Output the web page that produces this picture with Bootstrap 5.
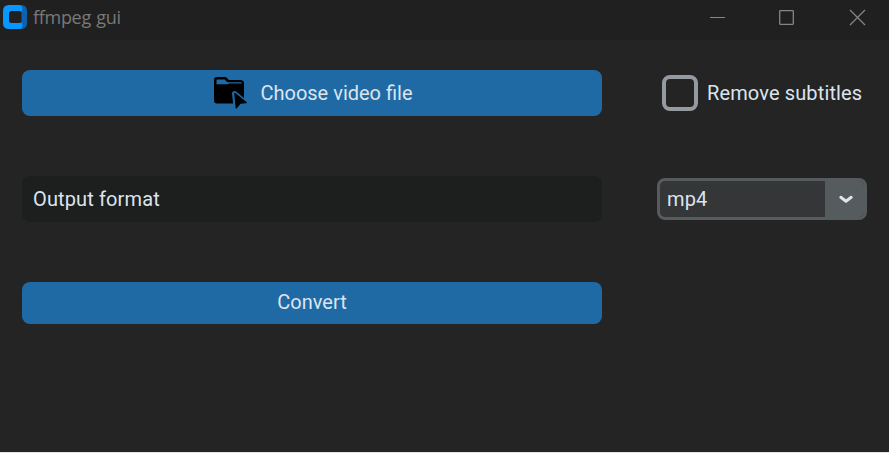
<!DOCTYPE html>
<html lang="en" data-bs-theme="dark">
<head>
<meta charset="utf-8">
<meta name="viewport" content="width=device-width, initial-scale=1">
<title>ffmpeg gui</title>
<link href="https://cdn.jsdelivr.net/npm/bootstrap@5.3.0/dist/css/bootstrap.min.css" rel="stylesheet">
<style>
  body { background: #e4e4e4; font-family: Roboto, "Liberation Sans", sans-serif; font-size: 20px; letter-spacing: .13px; color: #dce4ee; overflow: hidden; }
  .app-window { height: 452px; background: #242424; }
  .title-bar { height: 40px; background: #202020; color: #797979; padding-left: 3px; }
  .title-text { font-family: "Open Sans", "Noto Sans", sans-serif; font-size: 18px; line-height: 24px; margin-left: 6px; letter-spacing: -.3px; word-spacing: 1px; }
  .title-brand { padding-bottom: 6px; }
  .window-controls { width: 212px; padding-bottom: 6px; }
  .app-body { padding: 30px 22px 0; }
  .form-grid { display: grid; grid-template-columns: 580px 210px; column-gap: 55px; row-gap: 60px; grid-template-rows: 46px 46px 42px; }
  .app-btn { --bs-btn-bg: #1f6aa5; --bs-btn-hover-bg: #144870; --bs-btn-color: #dce4ee; --bs-btn-hover-color: #dce4ee; --bs-btn-border-width: 0; --bs-btn-border-radius: 8px; --bs-btn-font-size: 20px; --bs-btn-line-height: 24px; padding: 0 0 2px; }
  .choose-btn { padding: 0 0 0 2px; }
  .choose-icon { margin-right: 13px; }
  .format-label { background: #1d1e1e; border-radius: 8px; padding-left: 11px; }
  .subtitle-check { padding-left: 5px; gap: 9px; }
  .subtitle-check .form-check-input { width: 36px; height: 36px; border: 4px solid #949a9f; border-radius: 8px; background-color: transparent; }
  .format-select { height: 42px; margin-top: 2px; border: 3px solid #565b5e; border-radius: 8px; background: #343638; overflow: hidden; }
  .format-value { padding-left: 7px; }
  .format-toggle { width: 39px; background: #565b5e; --bs-btn-border-width: 0; }
</style>
</head>
<body>
<div class="app-window">
  <header class="title-bar d-flex align-items-center justify-content-between">
    <div class="title-brand d-flex align-items-center">
      <svg width="24" height="24" viewBox="0 0 24 24" aria-hidden="true">
        <path d="M16 0h2q6 0 6 6v12q0 6-6 6h-2z" fill="#0d61b0"/>
        <path d="M6 0h10q3.500 0 3.500 3.500T16 7v10q3.500 0 3.500 3.500T16 24H6q-6 0-6-6V6q0-6 6-6z" fill="#0897ff"/>
        <rect x="6" y="6" width="12.500" height="12" rx="2.500" fill="#202020"/>
      </svg>
      <span class="title-text">ffmpeg gui</span>
    </div>
    <div class="window-controls d-flex align-items-center">
      <svg width="212" height="24" viewBox="0 0 212 24" fill="none" stroke="#858585" stroke-width="1.3">
        <path d="M33 12.500h15" stroke-width="1"/>
        <rect x="102.700" y="5.700" width="13.600" height="13.600" rx=".5"/>
        <path d="m173 5 15 15m0-15-15 15"/>
      </svg>
    </div>
  </header>
  <main class="app-body">
    <div class="form-grid">
      <button type="button" class="btn app-btn choose-btn d-flex align-items-center justify-content-center">
        <svg class="choose-icon" width="34" height="34" viewBox="0 0 34 34" aria-hidden="true">
          <path d="M4 1h8q1 0 2 1l2 2h11.500q3.500 0 3.500 3.500V25q0 2.500-3 2.500H4q-3 0-3-3V4q0-3 3-3z" fill="#000"/>
          <path d="M3.500 7.500V4.500q0-1 1-1h7l3 2.700h13q1.500 0 1.500 1.300h-12.500q-1 0-2 .8h-11z" fill="#1f6aa5"/>
          <path d="m21.500 17.500 11 9-5.300.7-4 4.800z" fill="#1f6aa5" stroke="#1f6aa5" stroke-width="5" stroke-linejoin="round"/>
          <path d="m21.900 17.500 11.200 9-5.800.7-4 4.700z" fill="#000" stroke="#000" stroke-width="1.300" stroke-linejoin="round"/>
        </svg>
        <span>Choose video file</span>
      </button>
      <label class="subtitle-check d-flex align-items-center">
        <input class="form-check-input m-0 flex-shrink-0" type="checkbox">
        <span class="text-nowrap">Remove subtitles</span>
      </label>
      <div class="format-label d-flex align-items-center">Output format</div>
      <div class="format-select d-flex align-items-stretch">
        <span class="format-value flex-grow-1 d-flex align-items-center">mp4</span>
        <button type="button" class="format-toggle btn rounded-0 p-0 d-flex align-items-center justify-content-center" aria-label="Choose format">
          <svg class="ms-1" width="16" height="10" viewBox="0 0 16 10" fill="none" stroke="#dce4ee" stroke-width="3" stroke-linecap="round" stroke-linejoin="round"><path d="m1.800 3.300 5.200 3.900 5.200-3.900"/></svg>
        </button>
      </div>
      <button type="button" class="btn app-btn">Convert</button>
    </div>
  </main>
</div>
<script src="https://cdn.jsdelivr.net/npm/bootstrap@5.3.0/dist/js/bootstrap.bundle.min.js"></script>
</body>
</html>
